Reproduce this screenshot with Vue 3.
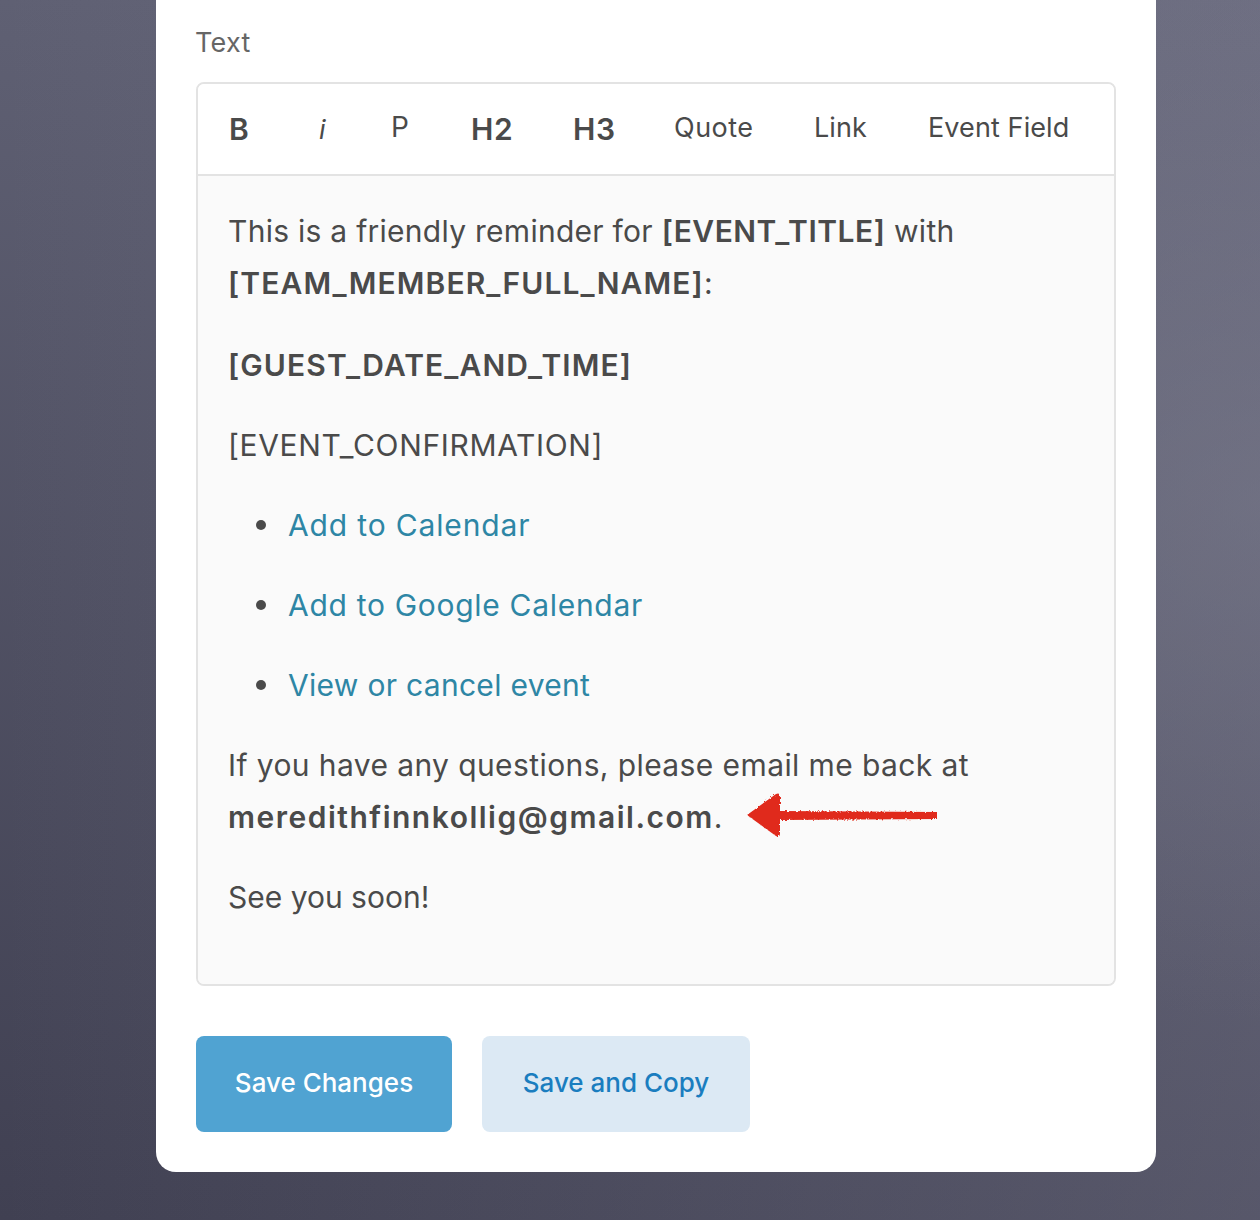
<script setup>
const tools = [
  { label: 'B', kind: 'strong' },
  { label: 'i', kind: 'em' },
  { label: 'P', kind: 'raised' },
  { label: 'H2', kind: 'strong' },
  { label: 'H3', kind: 'strong' },
  { label: 'Quote', kind: 'plain' },
  { label: 'Link', kind: 'plain' },
  { label: 'Event Field', kind: 'plain' },
]
const links = ['Add to Calendar', 'Add to Google Calendar', 'View or cancel event']
</script>

<template>
  <div class="page">
    <main class="card">
      <div class="label">Text</div>
      <section class="editor">
        <div class="toolbar">
          <button v-for="t in tools" :key="t.label" class="tool" :class="t.kind" type="button">{{ t.label }}</button>
        </div>
        <div class="content">
          <p class="intro">This is a friendly reminder for <strong class="title">[EVENT_TITLE]</strong> with <strong>[TEAM_MEMBER_FULL_NAME]</strong>:</p>
          <p class="date"><strong>[GUEST_DATE_AND_TIME]</strong></p>
          <p class="confirm">[EVENT_CONFIRMATION]</p>
          <ul>
            <li v-for="l in links" :key="l"><a href="#" @click.prevent>{{ l }}</a></li>
          </ul>
          <p>If you have any questions, please email me back at <span class="mail"><strong>meredithfinnkollig@gmail.com</strong>.
            <svg class="arrow" width="200" height="50" viewBox="0 0 200 50" aria-hidden="true">
              <defs>
                <filter id="rough" x="-5%" y="-20%" width="110%" height="140%">
                  <feTurbulence type="fractalNoise" baseFrequency="0.55" numOctaves="2" seed="4" />
                  <feDisplacementMap in="SourceGraphic" scale="3.5" />
                </filter>
              </defs>
              <g filter="url(#rough)" fill="#e0291b">
                <path d="M5 24 L34 3 Q38 1 38 6 L38 20 L195 21 L195 28 L38 29 L38 42 Q38 47 34 45 Z" />
              </g>
            </svg></span></p>
          <p class="bye">See you soon!</p>
        </div>
      </section>
      <div class="actions">
        <button class="btn primary" type="button">Save Changes</button>
        <button class="btn secondary" type="button">Save and Copy</button>
      </div>
    </main>
  </div>
</template>

<style>
html, body { margin: 0; padding: 0; }
</style>

<style scoped>
.page {
  box-sizing: border-box;
  width: 1260px;
  height: 1220px;
  overflow: hidden;
  padding-left: 156px;
  background:
    radial-gradient(circle at 1260px 500px, rgba(122, 123, 140, 0.5) 0, rgba(122, 123, 140, 0) 520px),
    linear-gradient(90deg, rgba(150, 150, 170, 0) 0%, rgba(150, 150, 170, 0.27) 100%),
    linear-gradient(180deg, #5f6073 0%, #404052 100%);
  font-family: Inter, "Open Sans", sans-serif;
  color: #4a4a4a;
}
.card {
  box-sizing: border-box;
  width: 1000px;
  height: 1172px;
  padding: 25px 40px 40px;
  background: #fff;
  border-radius: 0 0 20px 20px;
}
.label {
  font-size: 27px;
  line-height: 36px;
  letter-spacing: 0.3px;
  margin-left: -1px;
  color: #666;
  margin-bottom: 21px;
}
.editor {
  height: 904px;
  box-sizing: border-box;
  border: 2px solid #e3e3e3;
  border-radius: 8px;
  overflow: hidden;
}
.toolbar {
  height: 92px;
  box-sizing: border-box;
  border-bottom: 2px solid #e3e3e3;
  background: #fff;
  display: flex;
  align-items: center;
  padding-left: 31px;
}
.tool {
  border: 0;
  background: none;
  padding: 0;
  font: inherit;
  font-size: 27px;
  color: #4a4a4a;
  text-align: left;
}
.tool:nth-child(1) { width: 90px; }
.tool:nth-child(2) { width: 72px; }
.tool:nth-child(3) { width: 80px; }
.tool:nth-child(4) { width: 102px; }
.tool:nth-child(5) { width: 101px; }
.tool:nth-child(6) { width: 140px; }
.tool:nth-child(7) { width: 114px; }
.strong { font-weight: 600; font-size: 30px; letter-spacing: 0.6px; margin-top: -1px; }
.em { font-style: italic; }
.raised { margin-top: -5px; font-size: 28px; }
.plain { margin-top: -4px; letter-spacing: 0.5px; }
.tool:nth-child(7), .tool:nth-child(8) { letter-spacing: 0.1px; }
.content {
  height: 808px;
  box-sizing: border-box;
  background: #fafafa;
  padding: 29px 30px 0;
  font-size: 30px;
  letter-spacing: 0.4px;
  line-height: 52px;
  color: #4a4a4a;
}
.content p { margin: 0 0 28px; }
.content .date { margin-top: 30px; }
.content .intro { letter-spacing: 0.27px; }
.content .confirm { letter-spacing: 0.65px; }
.content .bye { letter-spacing: 0; }
.content strong { font-weight: 600; letter-spacing: 1.1px; }
.content .title { letter-spacing: 0.5px; }
.mail strong { letter-spacing: 1.5px !important; }
.content ul { margin: 0; padding: 0 0 0 60px; list-style: none; }
.content li { position: relative; margin-bottom: 28px; }
.content li::before {
  content: "";
  position: absolute;
  left: -32px;
  top: 21px;
  width: 10px;
  height: 10px;
  border-radius: 50%;
  background: #4a4a4a;
}
.content li:nth-child(1) { letter-spacing: 0.85px; }
.content li:nth-child(2) { letter-spacing: 0.7px; }
.content li:nth-child(3) { letter-spacing: 0.3px; }
.content a { color: #2e86a5; text-decoration: none; }
.mail { position: relative; display: inline-block; }
.arrow { position: absolute; left: 514px; top: 0; }
.actions { display: flex; gap: 30px; margin-top: 50px; }
.btn {
  height: 96px;
  border: 0;
  border-radius: 8px;
  padding: 0 0 4px;
  font: inherit;
  font-size: 26px;
  font-weight: 500;
}
.primary { width: 256px; background: #50a3d2; color: #fff; }
.secondary { width: 268px; background: #dce9f4; color: #1a7dbf; }
</style>
